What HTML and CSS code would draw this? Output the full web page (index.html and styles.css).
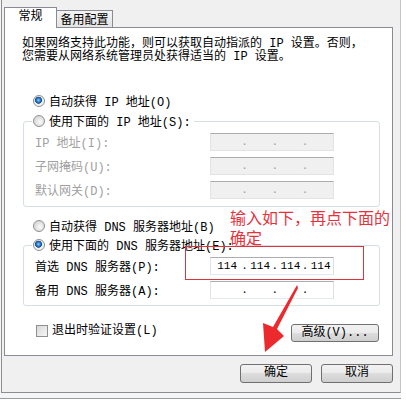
FILE: index.html
```html
<!DOCTYPE html>
<html lang="zh-CN">
<head>
  <meta charset="UTF-8">
  <meta name="viewport" content="width=device-width, initial-scale=1.0">
  <title>Internet 协议版本 4 (TCP/IPv4) 属性</title>
  <link rel="stylesheet" href="styles.css">
</head>
<body>

  <div class="window">
    <div class="dialog">

      <!-- Tabs -->
      <div class="tabs">
        <div class="tab active">常规</div>
        <div class="tab">备用配置</div>
      </div>

      <!-- General tab page -->
      <div class="panel">
        <p class="intro">如果网络支持此功能，则可以获取自动指派的 IP 设置。否则，<br>您需要从网络系统管理员处获得适当的 IP 设置。</p>

        <div class="radio-row first"><span class="radio checked"></span>自动获得 IP 地址(O)</div>
        <fieldset class="group">
          <legend class="radio-row"><span class="radio"></span>使用下面的 IP 地址(S):</legend>
          <div class="fields disabled">
            <span>IP 地址(I):</span>
            <div class="ip disabled"><span></span><span class="dot"></span><span class="dot"></span><span class="dot"></span></div>
            <span>子网掩码(U):</span>
            <div class="ip disabled"><span></span><span class="dot"></span><span class="dot"></span><span class="dot"></span></div>
            <span>默认网关(D):</span>
            <div class="ip disabled"><span></span><span class="dot"></span><span class="dot"></span><span class="dot"></span></div>
          </div>
        </fieldset>

        <div class="radio-row dns"><span class="radio"></span>自动获得 DNS 服务器地址(B)</div>
        <fieldset class="group dns">
          <legend class="radio-row"><span class="radio checked"></span>使用下面的 DNS 服务器地址(E):</legend>
          <div class="fields">
            <span>首选 DNS 服务器(P):</span>
            <div class="ip"><span>114</span><span class="dot">114</span><span class="dot">114</span><span class="dot">114</span></div>
            <span>备用 DNS 服务器(A):</span>
            <div class="ip"><span></span><span class="dot"></span><span class="dot"></span><span class="dot"></span></div>
          </div>
        </fieldset>

        <div class="options">
          <label class="check"><span class="box"></span>退出时验证设置(L)</label>
          <button class="btn advanced">高级(V)...</button>
        </div>
      </div>

      <!-- Dialog buttons -->
      <div class="actions">
        <button class="btn">确定</button>
        <button class="btn">取消</button>
      </div>
    </div>

    <!-- Red annotations drawn over the screenshot -->
    <p class="note">输入如下，再点下面的<br>确定</p>
    <div class="mark"></div>
    <svg class="arrow" width="44" height="74" viewBox="0 0 44 74">
      <polygon points="39,3 40,6 19,47 26,54 7,70 5,41 15,45" fill="#ec2a2e"/>
    </svg>
  </div>

</body>
</html>
```

FILE: styles.css
```css
/* Page */
body {
  margin: 0;
  background-color: #fff;
  font-family: "Liberation Mono", "Noto Sans CJK SC", monospace;
  font-size: 12px;
  color: #000;
}

.window {
  position: relative;
  width: 400px;
  padding-left: 1px;
  padding-bottom: 5px;
  background-color: #f3f5f7;
  border-bottom: 1px solid #9b9b9b;
}

.dialog {
  width: 400px;
  height: 393px;
  box-sizing: border-box;
  background-color: #f0f0f0;
  border-left: 1px solid #8e8e8e;
  border-right: 1px solid #c4c4c4;
  border-bottom: 1px solid #8e8e8e;
}

/* Tabs */
.tabs {
  display: flex;
  align-items: flex-end;
  height: 27px;
  padding-left: 2px;
}

.tab {
  display: flex;
  justify-content: center;
  box-sizing: border-box;
  border: 1px solid #898c95;
  border-bottom: none;
  line-height: 13px;
}

.tab.active {
  position: relative;
  z-index: 1;
  width: 53px;
  height: 21px;
  padding-top: 3px;
  margin-bottom: -1px;
  background-color: #fff;
}

.tab:not(.active) {
  width: 56px;
  height: 17px;
  padding-top: 4px;
  border-left: none;
  background: linear-gradient(#f3f3f3, #e4e4e4);
}

/* Tab page */
.panel {
  margin: 0 7px 0 2px;
  padding-bottom: 13px;
  border: 1px solid #898c95;
  background-color: #fff;
}

.intro {
  margin: 10px 0 0 17px;
  line-height: 13px;
}

.radio-row {
  display: flex;
  align-items: center;
  width: fit-content;
  height: 16px;
}

.radio-row.first {
  margin: 29px 0 0 28px;
}

.radio-row.dns {
  margin: 11px 0 0 28px;
}

.radio {
  flex: none;
  width: 12px;
  height: 12px;
  box-sizing: border-box;
  margin-right: 4px;
  border: 1px solid #8e8f8f;
  border-radius: 50%;
  background: radial-gradient(circle at 60% 60%, #fafafa 0, #dcdcdc 5px);
}

.radio.checked {
  background: radial-gradient(circle at 45% 42%, #8fd4f8 0, #2a7ac7 2px, #174f92 3.2px, #e3e8ec 3.8px, #f7f7f7 5px);
}

/* Group boxes */
.group {
  width: 357px;
  min-width: 0;
  box-sizing: border-box;
  margin: 4px 0 0 18px;
  padding: 4px 0 7px 11px;
  border: 1px solid #d5dfe5;
  border-radius: 3px;
}

.group.dns {
  margin-top: 3px;
  padding-bottom: 6px;
}

.group legend {
  padding: 0 3px 0 1px;
  margin-left: -3px;
}

.fields {
  display: grid;
  grid-template-columns: 175px 124px;
  row-gap: 6px;
  align-items: center;
}

.fields > span {
  width: fit-content;
}

.fields.disabled {
  color: #a0a0a0;
}

/* IP address boxes */
.ip {
  display: flex;
  height: 18px;
  box-sizing: border-box;
  padding-left: 1px;
  border: 1px solid;
  border-color: #abadb3 #dbdfe6 #e3e9ef #e2e3ea;
  background-color: #fff;
  font-size: 11px;
  line-height: 16px;
  color: #000;
}

.ip.disabled {
  border-color: #adadad #e3e3e3 #e3e3e3 #e3e3e3;
  background-color: #f0f0f0;
  color: #a0a0a0;
}

.ip span {
  flex: 1;
  text-align: center;
}

.ip .dot::before {
  content: ".";
  float: left;
  margin-left: -1px;
}

/* Bottom options row */
.options {
  display: flex;
  justify-content: space-between;
  align-items: flex-start;
  margin: 18px 13px 0 31px;
}

.check {
  display: flex;
  align-items: center;
  line-height: 14px;
}

.box {
  width: 12px;
  height: 12px;
  box-sizing: border-box;
  margin-right: 4px;
  border: 1px solid #8f8f8f;
  background: linear-gradient(135deg, #d8d8d8, #f6f6f6);
}

.btn {
  height: 19px;
  box-sizing: border-box;
  padding: 0;
  border: 1px solid #707070;
  border-radius: 3px;
  background: linear-gradient(#f2f2f2 0%, #ebebeb 49%, #dddddd 50%, #cfcfcf 100%);
  font: inherit;
  line-height: 17px;
  color: #000;
}

.btn.advanced {
  width: 88px;
  height: 18px;
  line-height: 16px;
}

.actions {
  display: flex;
  justify-content: flex-end;
  gap: 9px;
  margin: 8px 7px 0 0;
}

.actions .btn {
  width: 72px;
}

/* Red annotations */
.note {
  position: absolute;
  left: 230px;
  top: 207px;
  margin: 0;
  font-family: "Noto Sans CJK SC", sans-serif;
  font-size: 16px;
  line-height: 20px;
  color: #e8313b;
}

.mark {
  position: absolute;
  left: 185px;
  top: 246px;
  width: 179px;
  height: 34px;
  box-sizing: border-box;
  border: 1px solid #e0323c;
}

.arrow {
  position: absolute;
  left: 258px;
  top: 282px;
}
```
